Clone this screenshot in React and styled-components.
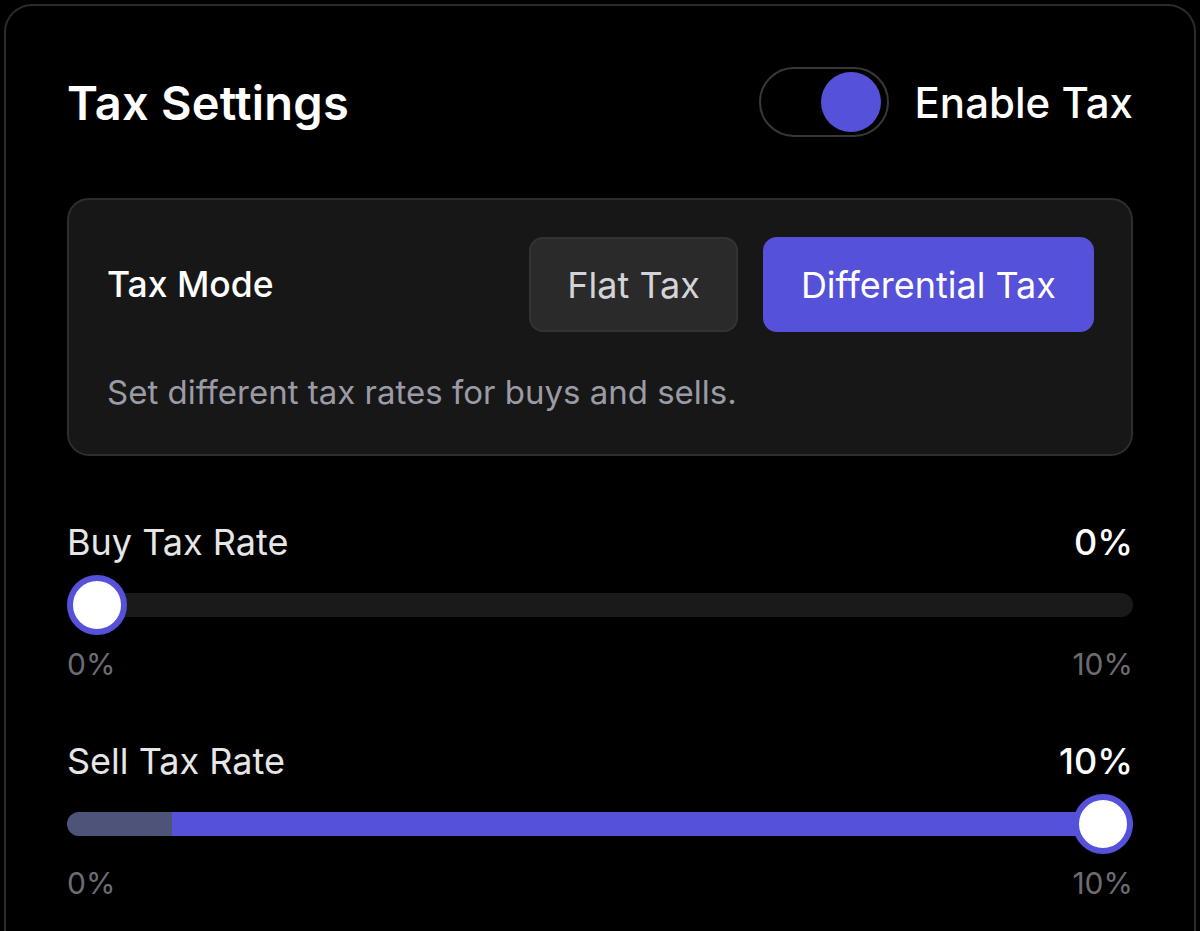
import React from "react";
import styled, { createGlobalStyle } from "styled-components";

const ACCENT = "#5551d9";

const GlobalStyle = createGlobalStyle`
  html, body {
    margin: 0;
    padding: 0;
    background: #000;
  }
  body {
    font-family: Inter, "Noto Sans", "Liberation Sans", sans-serif;
    color: #fff;
    -webkit-font-smoothing: antialiased;
  }
`;

const Page = styled.div`
  padding: 4px 4px 0 4px;
  height: 931px;
  box-sizing: border-box;
  overflow: hidden;
`;

const Panel = styled.section`
  border: 2px solid #2b2b2b;
  border-bottom: none;
  border-radius: 28px 28px 0 0;
  padding: 61px 61px 80px 61px;
  min-height: 1000px;
  box-sizing: border-box;
`;

const Header = styled.header`
  display: flex;
  align-items: center;
  justify-content: space-between;
  height: 70px;
`;

const Title = styled.h1`
  margin: 0;
  font-size: 47px;
  font-weight: 600;
  letter-spacing: 0.2px;
`;

const ToggleWrap = styled.label`
  display: flex;
  align-items: center;
  gap: 26px;
  font-size: 42px;
  font-weight: 500;
`;

const Switch = styled.span`
  position: relative;
  width: 130px;
  height: 70px;
  box-sizing: border-box;
  border: 2px solid #383838;
  border-radius: 999px;
  background: #000;
`;

const Knob = styled.span`
  position: absolute;
  top: 3px;
  left: ${(p) => (p.$on ? "60px" : "4px")};
  width: 60px;
  height: 60px;
  border-radius: 50%;
  background: ${ACCENT};
`;

const ModeCard = styled.div`
  margin-top: 61px;
  background: #171717;
  border: 2px solid #2e2e2e;
  border-radius: 22px;
  padding: 37px 37px 40px 38px;
`;

const ModeRow = styled.div`
  display: flex;
  align-items: center;
  justify-content: space-between;
`;

const ModeLabel = styled.div`
  font-size: 35.5px;
  font-weight: 500;
`;

const Buttons = styled.div`
  display: flex;
  gap: 25px;
`;

const ModeButton = styled.button`
  height: 95px;
  padding: 0 36px;
  border-radius: 14px;
  font-family: inherit;
  font-size: 36px;
  font-weight: 400;
  cursor: pointer;
  color: ${(p) => (p.$active ? "#fff" : "#d4d4d8")};
  background: ${(p) => (p.$active ? ACCENT : "#2a2a2a")};
  border: 2px solid ${(p) => (p.$active ? ACCENT : "#333")};
`;

const Hint = styled.p`
  margin: 38px 0 0 0;
  font-size: 33px;
  line-height: 44px;
  color: #9b9ba6;
`;

const SliderBlock = styled.div`
  margin-top: ${(p) => p.$top}px;
`;

const SliderHead = styled.div`
  display: flex;
  justify-content: space-between;
  align-items: center;
  height: 44px;
  font-size: 36px;
`;

const SliderLabel = styled.span`
  color: #e6e6e6;
`;

const SliderValue = styled.span`
  font-weight: 500;
  color: #fff;
`;

const TrackArea = styled.div`
  position: relative;
  margin-top: 11px;
  height: 60px;
  display: flex;
  align-items: center;
`;

const Track = styled.div`
  width: 100%;
  height: 24px;
  border-radius: 12px;
  background: #1a1a1a;
  overflow: hidden;
`;

const Fill = styled.div`
  height: 100%;
  background: linear-gradient(to right, #4e5379 0 105px, ${ACCENT} 105px);
`;

const Thumb = styled.div`
  position: absolute;
  top: 0;
  width: 60px;
  height: 60px;
  box-sizing: border-box;
  border-radius: 50%;
  border: 6px solid ${ACCENT};
  background: #fff;
`;

const Scale = styled.div`
  margin-top: 11px;
  display: flex;
  justify-content: space-between;
  font-size: 30px;
  line-height: 36px;
  color: #6c6c72;
`;

function RateSlider({ label, value, max, top }) {
  const pct = value / max;
  return (
    <SliderBlock $top={top}>
      <SliderHead>
        <SliderLabel>{label}</SliderLabel>
        <SliderValue>{value}%</SliderValue>
      </SliderHead>
      <TrackArea>
        <Track>{pct > 0 && <Fill style={{ width: `${pct * 100}%` }} />}</Track>
        <Thumb style={{ left: `calc((100% - 60px) * ${pct})` }} />
      </TrackArea>
      <Scale>
        <span>0%</span>
        <span>{max}%</span>
      </Scale>
    </SliderBlock>
  );
}

export default function App() {
  return (
    <Page>
      <GlobalStyle />
      <Panel>
        <Header>
          <Title>Tax Settings</Title>
          <ToggleWrap>
            <Switch>
              <Knob $on />
            </Switch>
            Enable Tax
          </ToggleWrap>
        </Header>

        <ModeCard>
          <ModeRow>
            <ModeLabel>Tax Mode</ModeLabel>
            <Buttons>
              <ModeButton>Flat Tax</ModeButton>
              <ModeButton $active>Differential Tax</ModeButton>
            </Buttons>
          </ModeRow>
          <Hint>Set different tax rates for buys and sells.</Hint>
        </ModeCard>

        <RateSlider label="Buy Tax Rate" value={0} max={10} top={64} />
        <RateSlider label="Sell Tax Rate" value={10} max={10} top={57} />
      </Panel>
    </Page>
  );
}
